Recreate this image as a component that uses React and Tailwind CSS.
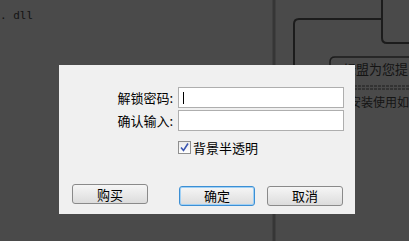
import React from "react";

const cjk = { fontFamily: '"Noto Sans CJK SC", "Noto Sans", sans-serif' };

const Backdrop = () => (
    <div className="absolute inset-0">
        <div className="absolute left-0 top-[8px] text-[11px] text-[#141414]" style={{ fontFamily: '"DejaVu Sans Mono", monospace' }}>
            . dll
        </div>
        <svg className="absolute inset-0" width="409" height="241" viewBox="0 0 409 241">
            {/* faint splitter */}
            <line x1="274" y1="0" x2="274" y2="241" stroke="#363636" strokeWidth="3" />
            {/* flow chart lines */}
            <path d="M382 0 V38 Q382 43 387 43 H409" fill="none" stroke="#1c1c1c" strokeWidth="2" />
            <path d="M381 19 H299 Q294 19 294 24 V66" fill="none" stroke="#1c1c1c" strokeWidth="2" />
            <path d="M330 84 V62 Q330 57 335 57 H409" fill="none" stroke="#1c1c1c" strokeWidth="1.5" />
            <line x1="330" y1="86" x2="409" y2="86" stroke="#1c1c1c" strokeWidth="1" strokeDasharray="3 1" />
            <line x1="330" y1="89" x2="409" y2="89" stroke="#1c1c1c" strokeWidth="1" strokeDasharray="3 1" />
        </svg>
        <div className="absolute left-[343px] top-[62px] text-[13px] leading-none text-[#141414] whitespace-nowrap" style={cjk}>
            绿盟为您提
        </div>
        <div className="absolute left-[349px] top-[96px] text-[12px] leading-none text-[#141414] whitespace-nowrap" style={cjk}>
            安装使用如
        </div>
    </div>
);

const Button = ({ children, focused }) => (
    <button
        className={
            "w-[76px] h-[20px] rounded-[3px] text-[13px] leading-none text-black bg-gradient-to-b from-[#f6f6f6] to-[#dcdcdc] " +
            (focused ? "border border-[#3c8fd4] shadow-[inset_0_0_0_1px_#9fd0f5]" : "border border-[#8a8a8a]")
        }
        style={cjk}
    >
        {children}
    </button>
);

export default function App() {
    return (
        <div className="relative w-[409px] h-[241px] bg-[#4a4a4a] overflow-hidden">
            <Backdrop />

            <div className="absolute left-[59px] top-[65px] w-[296px] h-[149px] bg-[#f0f0f0] flex flex-col" style={cjk}>
                <div className="flex flex-col gap-[2px] pt-[22px] pl-[54px]">
                    <div className="flex items-center">
                        <span className="w-[65px] text-right text-[13px] text-black pr-[5px]">解锁密码:</span>
                        <div className="w-[166px] h-[21px] bg-white border border-[#aeaeae] flex items-center pl-[4px]">
                            <div className="w-[1px] h-[12px] bg-black" />
                        </div>
                    </div>
                    <div className="flex items-center">
                        <span className="w-[65px] text-right text-[13px] text-black pr-[5px]">确认输入:</span>
                        <div className="w-[166px] h-[21px] bg-white border border-[#aeaeae]" />
                    </div>
                </div>

                <div className="flex items-center gap-[2px] pl-[119px] mt-[10px]">
                    <div className="w-[13px] h-[13px] border border-[#8f8f8f] bg-gradient-to-b from-[#eaeaea] to-[#ffffff] flex items-center justify-center">
                        <svg width="11" height="11" viewBox="0 0 11 11">
                            <path d="M2 5.5 L4.5 8.5 L9 1.5" fill="none" stroke="#3a55b0" strokeWidth="1.6" />
                        </svg>
                    </div>
                    <span className="text-[13px] text-black leading-none">背景半透明</span>
                </div>

                <div className="flex items-center pl-[13px] mt-[28px]">
                    <Button>购买</Button>
                    <div className="ml-[31px]">
                        <Button focused>确定</Button>
                    </div>
                    <div className="ml-[12px]">
                        <Button>取消</Button>
                    </div>
                </div>
            </div>
        </div>
    );
}
